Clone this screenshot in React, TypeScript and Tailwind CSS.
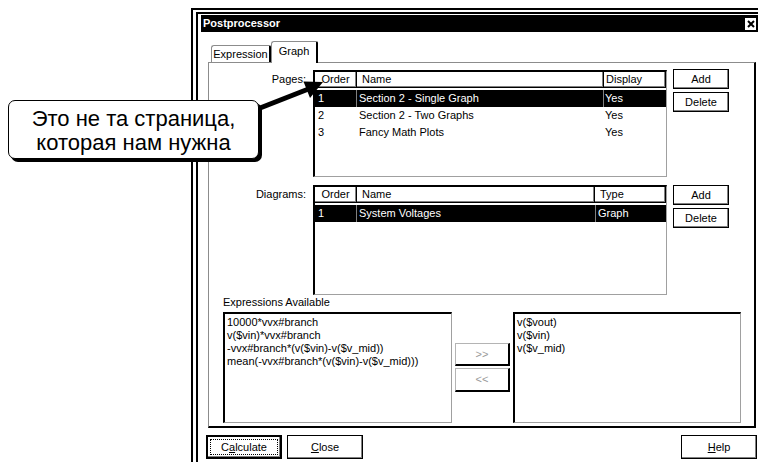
import React from "react";

function Btn({ children, className }: { children: React.ReactNode; className: string }) {
  return (
    <div
      className={
        "flex items-center justify-center bg-white text-[11px] leading-[13px] border border-black shadow-[inset_-1px_-1px_0_#808080] " +
        className
      }
    >
      {children}
    </div>
  );
}

const hdr =
  "h-[16px] flex items-center text-[11px] leading-[13px] border-r border-b border-black shadow-[inset_-1px_-1px_0_#808080]";

function PagesList() {
  const rows = [
    ["1", "Section 2 - Single Graph", "Yes"],
    ["2", "Section 2 - Two Graphs", "Yes"],
    ["3", "Fancy Math Plots", "Yes"],
  ];
  return (
    <div className="w-[354px] h-[107px] bg-white border-t-2 border-l-2 border-r border-b border-t-black border-l-black border-r-[#a0a0a0] border-b-[#a0a0a0]">
      <div className="flex">
        <div className={hdr + " w-[42px] justify-center"}>Order</div>
        <div className={hdr + " w-[247px] pl-[5px]"}>Name</div>
        <div className={hdr + " w-[62px] pl-[2px]"}>Display</div>
      </div>
      <div className="mt-[2px] flex flex-col">
        {rows.map((r, i) => {
          const sel = i === 0;
          const cell = sel ? "bg-black text-white" : "";
          return (
            <div
              key={i}
              className={
                "h-[17px] flex gap-[1px] text-[11px] leading-[13px] " + (sel ? "bg-[#808080]" : "bg-white")
              }
            >
              <div className={"w-[41px] pl-[3px] flex items-center " + cell}>{r[0]}</div>
              <div className={"w-[246px] pl-[2px] flex items-center " + cell}>{r[1]}</div>
              <div className={"w-[62px] pl-[1px] flex items-center " + cell}>{r[2]}</div>
            </div>
          );
        })}
      </div>
    </div>
  );
}

function DiagramsList() {
  return (
    <div className="w-[354px] h-[110px] bg-white border-t-2 border-l-2 border-r border-b border-t-black border-l-black border-r-[#a0a0a0] border-b-[#a0a0a0]">
      <div className="flex">
        <div className={hdr + " w-[42px] justify-center"}>Order</div>
        <div className={hdr + " w-[238px] pl-[5px]"}>Name</div>
        <div className={hdr + " w-[71px] pl-[5px]"}>Type</div>
      </div>
      <div className="mt-[2px] flex flex-col">
        <div className="h-[17px] flex gap-[1px] text-[11px] leading-[13px] bg-[#808080]">
          <div className="w-[41px] pl-[3px] flex items-center bg-black text-white">1</div>
          <div className="w-[238px] pl-[2px] flex items-center bg-black text-white">System Voltages</div>
          <div className="w-[70px] pl-[2px] flex items-center bg-black text-white">Graph</div>
        </div>
      </div>
    </div>
  );
}

export default function App() {
  return (
    <div className="relative w-[758px] h-[462px] overflow-hidden bg-white text-black font-['Liberation_Sans',Arial,sans-serif]">
      <div className="pl-[191px] pt-[8px]">
        <div className="w-[580px] border-l-2 border-t-2 border-black pl-[3px] pt-[2px]">
          <div className="border-l-2 border-t-2 border-black pl-[3px] pt-[1px]">
            <div className="w-[558px]">
              {/* Title bar */}
              <div className="h-[17px] bg-black flex items-center justify-between pl-[2px] pr-[3px]">
                <span className="text-white font-bold text-[11px] leading-[13px]">Postprocessor</span>
                <div className="w-[11px] h-[12px] bg-white flex items-center justify-center">
                  <svg width="8" height="8" viewBox="0 0 8 8">
                    <path d="M1 1 L7 7 M7 1 L1 7" stroke="#000" strokeWidth="2" />
                  </svg>
                </div>
              </div>

              {/* Tabs */}
              <div className="relative z-10 mt-[9px] pl-[10px] h-[21px] flex items-end">
                <div className="w-[60px] h-[17px] flex items-center justify-center text-[11px] leading-[13px] bg-white border-l border-t border-[#8c8c8c] border-r-2 border-r-black rounded-tl-[3px] rounded-tr-[2px]">
                  Expression
                </div>
                <div className="w-[47px] h-[22px] -mb-[1px] pb-[3px] flex items-center justify-center text-[11px] leading-[13px] bg-white border-l border-t border-[#8c8c8c] border-r-2 border-r-black rounded-tl-[3px] rounded-tr-[2px]">
                  Graph
                </div>
              </div>

              {/* Panel */}
              <div className="ml-[7px] w-[548px] bg-white border-l border-t border-[#8c8c8c] border-r-2 border-b-2 border-r-black border-b-black pt-[7px] pb-[3px]">
                <div className="flex">
                  <div className="w-[104px] pr-[7px] pt-[3px] text-right text-[11px] leading-[13px]">Pages:</div>
                  <PagesList />
                  <div className="ml-[6px] -mt-[1px] flex flex-col gap-[3px]">
                    <Btn className="w-[56px] h-[20px]">Add</Btn>
                    <Btn className="w-[56px] h-[20px]">Delete</Btn>
                  </div>
                </div>

                <div className="mt-[8px] flex">
                  <div className="w-[104px] pr-[7px] pt-[3px] text-right text-[11px] leading-[13px]">Diagrams:</div>
                  <DiagramsList />
                  <div className="ml-[6px] flex flex-col gap-[3px]">
                    <Btn className="w-[56px] h-[20px]">Add</Btn>
                    <Btn className="w-[56px] h-[20px]">Delete</Btn>
                  </div>
                </div>

                <div className="mt-[1px] pl-[14px] text-[11px] leading-[13px]">Expressions Available</div>

                <div className="mt-[3px] pl-[14px] flex items-center">
                  <div className="w-[229px] h-[111px] bg-white pl-[2px] pt-[2px] text-[11px] leading-[13px] border-t-2 border-l-2 border-r border-b border-t-black border-l-black border-r-[#a0a0a0] border-b-[#a0a0a0]">
                    <div>10000*vvx#branch</div>
                    <div>v($vin)*vvx#branch</div>
                    <div>-vvx#branch*(v($vin)-v($v_mid))</div>
                    <div>mean(-vvx#branch*(v($vin)-v($v_mid)))</div>
                  </div>
                  <div className="ml-[3px] flex flex-col gap-[2px]">
                    <div className="w-[55px] h-[23px] flex items-center justify-center bg-white text-[11px] leading-[13px] text-[#9a9a9a] border-l border-t border-[#b4b4b4] border-r-2 border-b-2 border-r-black border-b-black">
                      &gt;&gt;
                    </div>
                    <div className="w-[55px] h-[24px] flex items-center justify-center bg-white text-[11px] leading-[13px] text-[#9a9a9a] border-l border-t border-[#b4b4b4] border-r-2 border-b-2 border-r-black border-b-black">
                      &lt;&lt;
                    </div>
                  </div>
                  <div className="ml-[3px] w-[228px] h-[111px] bg-white pl-[2px] pt-[2px] text-[11px] leading-[13px] border-t-2 border-l-2 border-r border-b border-t-black border-l-black border-r-[#a0a0a0] border-b-[#a0a0a0]">
                    <div>v($vout)</div>
                    <div>v($vin)</div>
                    <div>v($v_mid)</div>
                  </div>
                </div>
              </div>

              {/* Bottom buttons */}
              <div className="mt-[7px] pl-[5px] pr-[2px] flex">
                <div className="w-[76px] h-[24px] flex border-2 border-black bg-white shadow-[inset_-1px_-1px_0_#808080]">
                  <div className="m-[2px] flex-1 flex items-center justify-center border border-dotted border-black text-[11px] leading-[13px]">
                    <span>
                      C<span className="underline">a</span>lculate
                    </span>
                  </div>
                </div>
                <Btn className="ml-[5px] w-[76px] h-[24px]">
                  <span>
                    <span className="underline">C</span>lose
                  </span>
                </Btn>
                <div className="flex-1" />
                <Btn className="w-[76px] h-[24px]">
                  <span>
                    <span className="underline">H</span>elp
                  </span>
                </Btn>
              </div>
              <div className="h-[20px]" />
            </div>
          </div>
        </div>
      </div>

      {/* Callout arrow */}
      <svg className="absolute left-0 top-0 pointer-events-none" width="758" height="462" viewBox="0 0 758 462">
        <line x1="250" y1="112" x2="311" y2="88" stroke="#000" strokeWidth="5" />
        <polygon points="323,82 310,98 303.5,81.5" fill="#000" />
      </svg>

      {/* Callout */}
      <div className="absolute left-[8px] top-[100px] w-[251px] h-[59px] pt-[2px] rounded-[7px] border border-black bg-white shadow-[3px_3px_0_#000] flex flex-col items-center justify-center text-[22px] leading-[24px] font-['Liberation_Sans',Arial,sans-serif]">
        <span>Это не та страница,</span>
        <span>которая нам нужна</span>
      </div>
    </div>
  );
}
